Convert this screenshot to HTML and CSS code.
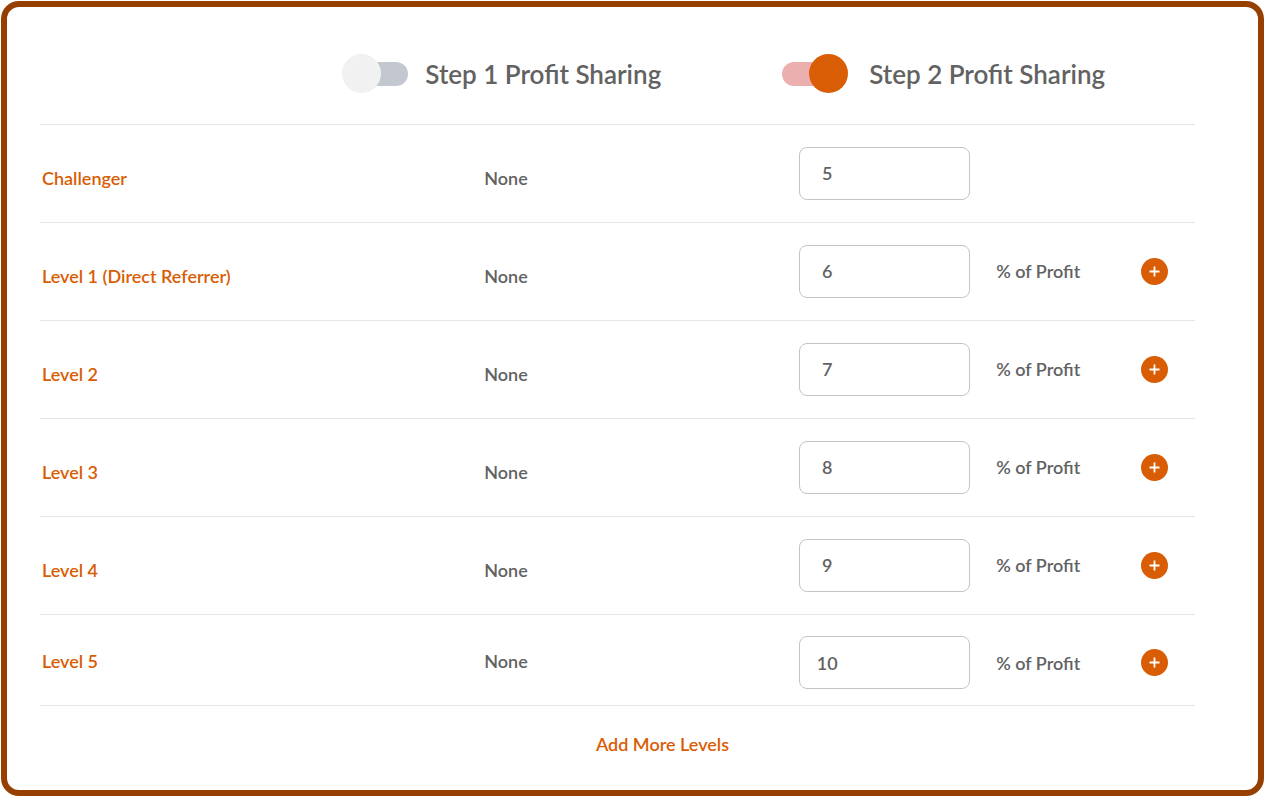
FILE: index.html
```
<!DOCTYPE html>
<html lang="en">
<head>
    <meta charset="UTF-8">
    <meta name="viewport" content="width=device-width, initial-scale=1.0">
    <title>Profit Sharing</title>
    <link rel="stylesheet" href="styles.css">
</head>
<body>
    <main class="panel">
        <table class="levels">
            <thead>
                <tr>
                    <td class="col-level"></td>
                    <th class="col-step1" scope="col">
                        <label class="toggle"><input type="checkbox"> Step 1 Profit Sharing</label>
                    </th>
                    <th class="col-step2" scope="col">
                        <label class="toggle"><input type="checkbox" checked> Step 2 Profit Sharing</label>
                    </th>
                </tr>
            </thead>
            <tbody>
                <tr>
                    <th class="level" scope="row"><label for="challenger">Challenger</label></th>
                    <td class="step1">None</td>
                    <td>
                        <div class="share">
                            <input type="text" id="challenger" value="5">
                        </div>
                    </td>
                </tr>
                <tr>
                    <th class="level" scope="row"><label for="level1">Level 1 (Direct Referrer)</label></th>
                    <td class="step1">None</td>
                    <td>
                        <div class="share">
                            <input type="text" id="level1" value="6">
                            <span>% of Profit</span>
                            <button type="button" class="add" aria-label="Add"><svg viewBox="0 0 27 27"><path d="M13.5 8.5v10M8.5 13.5h10"/></svg></button>
                        </div>
                    </td>
                </tr>
                <tr>
                    <th class="level" scope="row"><label for="level2">Level 2</label></th>
                    <td class="step1">None</td>
                    <td>
                        <div class="share">
                            <input type="text" id="level2" value="7">
                            <span>% of Profit</span>
                            <button type="button" class="add" aria-label="Add"><svg viewBox="0 0 27 27"><path d="M13.5 8.5v10M8.5 13.5h10"/></svg></button>
                        </div>
                    </td>
                </tr>
                <tr>
                    <th class="level" scope="row"><label for="level3">Level 3</label></th>
                    <td class="step1">None</td>
                    <td>
                        <div class="share">
                            <input type="text" id="level3" value="8">
                            <span>% of Profit</span>
                            <button type="button" class="add" aria-label="Add"><svg viewBox="0 0 27 27"><path d="M13.5 8.5v10M8.5 13.5h10"/></svg></button>
                        </div>
                    </td>
                </tr>
                <tr>
                    <th class="level" scope="row"><label for="level4">Level 4</label></th>
                    <td class="step1">None</td>
                    <td>
                        <div class="share">
                            <input type="text" id="level4" value="9">
                            <span>% of Profit</span>
                            <button type="button" class="add" aria-label="Add"><svg viewBox="0 0 27 27"><path d="M13.5 8.5v10M8.5 13.5h10"/></svg></button>
                        </div>
                    </td>
                </tr>
                <tr class="last">
                    <th class="level" scope="row"><label for="level5">Level 5</label></th>
                    <td class="step1">None</td>
                    <td>
                        <div class="share">
                            <input type="text" id="level5" value="10">
                            <span>% of Profit</span>
                            <button type="button" class="add" aria-label="Add"><svg viewBox="0 0 27 27"><path d="M13.5 8.5v10M8.5 13.5h10"/></svg></button>
                        </div>
                    </td>
                </tr>
            </tbody>
        </table>
        <div class="more">
            <button type="button">Add More Levels</button>
        </div>
    </main>
</body>
</html>
```
FILE: styles.css
```
/* Reset */
* {
    margin: 0;
    padding: 0;
    box-sizing: border-box;
}

body {
    font-family: 'Lato', sans-serif;
    font-size: 18px;
    font-weight: 600;
    line-height: 24px;
    color: #626262;
    background: #fff;
    padding: 1px 0 1px 1px;
}

input,
button {
    font: inherit;
    color: inherit;
}

button {
    border: none;
    background: none;
    cursor: pointer;
}

/* Main frame */
.panel {
    min-height: calc(100vh - 2px);
    border: 6px solid #963f00;
    border-radius: 18px;
    padding: 17px 63px 24px 33px;
}

/* Levels table */
.levels {
    width: 100%;
    table-layout: fixed;
    border-collapse: collapse;
}

.levels th,
.levels td {
    font-weight: inherit;
    text-align: left;
}

.levels tr {
    height: 98px;
    border-bottom: 1px solid #e5e5e5;
}

.levels thead tr {
    height: 100px;
}

.col-level {
    width: 26%;
}

.col-step1 {
    width: 38%;
}

.levels .level {
    padding: 10px 0 0 2px;
    color: #d95d04;
}

.levels .step1 {
    padding: 10px 0 0 144px;
}

.levels .last {
    height: 91px;
}

.levels .last td {
    padding-top: 6px;
}

.levels .last .level,
.levels .last .step1 {
    padding-top: 3px;
}

/* Toggle switch */
.toggle {
    display: flex;
    align-items: center;
    gap: 17px;
    padding-left: 2px;
    font-size: 26px;
    line-height: 32px;
}

.col-step2 .toggle {
    gap: 21px;
    padding-left: 3px;
}

.toggle input {
    appearance: none;
    display: grid;
    align-items: center;
    flex: none;
    width: 66px;
    height: 39px;
    cursor: pointer;
}

.toggle input::before,
.toggle input::after {
    content: "";
    grid-area: 1 / 1;
}

.toggle input::before {
    height: 24px;
    margin-left: 20px;
    border-radius: 12px;
    background: #c3c8d0;
}

.toggle input::after {
    width: 39px;
    height: 39px;
    border-radius: 50%;
    background: #f1f1f1;
}

.toggle input:checked::before {
    margin: 0 20px 0 0;
    background: #ebafaf;
}

.toggle input:checked::after {
    justify-self: end;
    background: #d95d04;
}

/* Share input with its unit and add button */
.share {
    display: flex;
    align-items: center;
    padding: 0 27px 0 20px;
}

.share input {
    width: 171px;
    height: 53px;
    padding-right: 115px;
    border: 1px solid #c4c4c4;
    border-radius: 8px;
    text-align: center;
}

.share span {
    margin-left: 26px;
}

.add {
    width: 27px;
    height: 27px;
    margin-left: auto;
    border-radius: 50%;
    background: #d95d04;
}

.add svg {
    display: block;
    fill: none;
    stroke: #fff;
    stroke-width: 1.8;
}

/* Add more */
.more {
    padding: 26px 0 0 90px;
    text-align: center;
}

.more button {
    color: #d95d04;
}
```
